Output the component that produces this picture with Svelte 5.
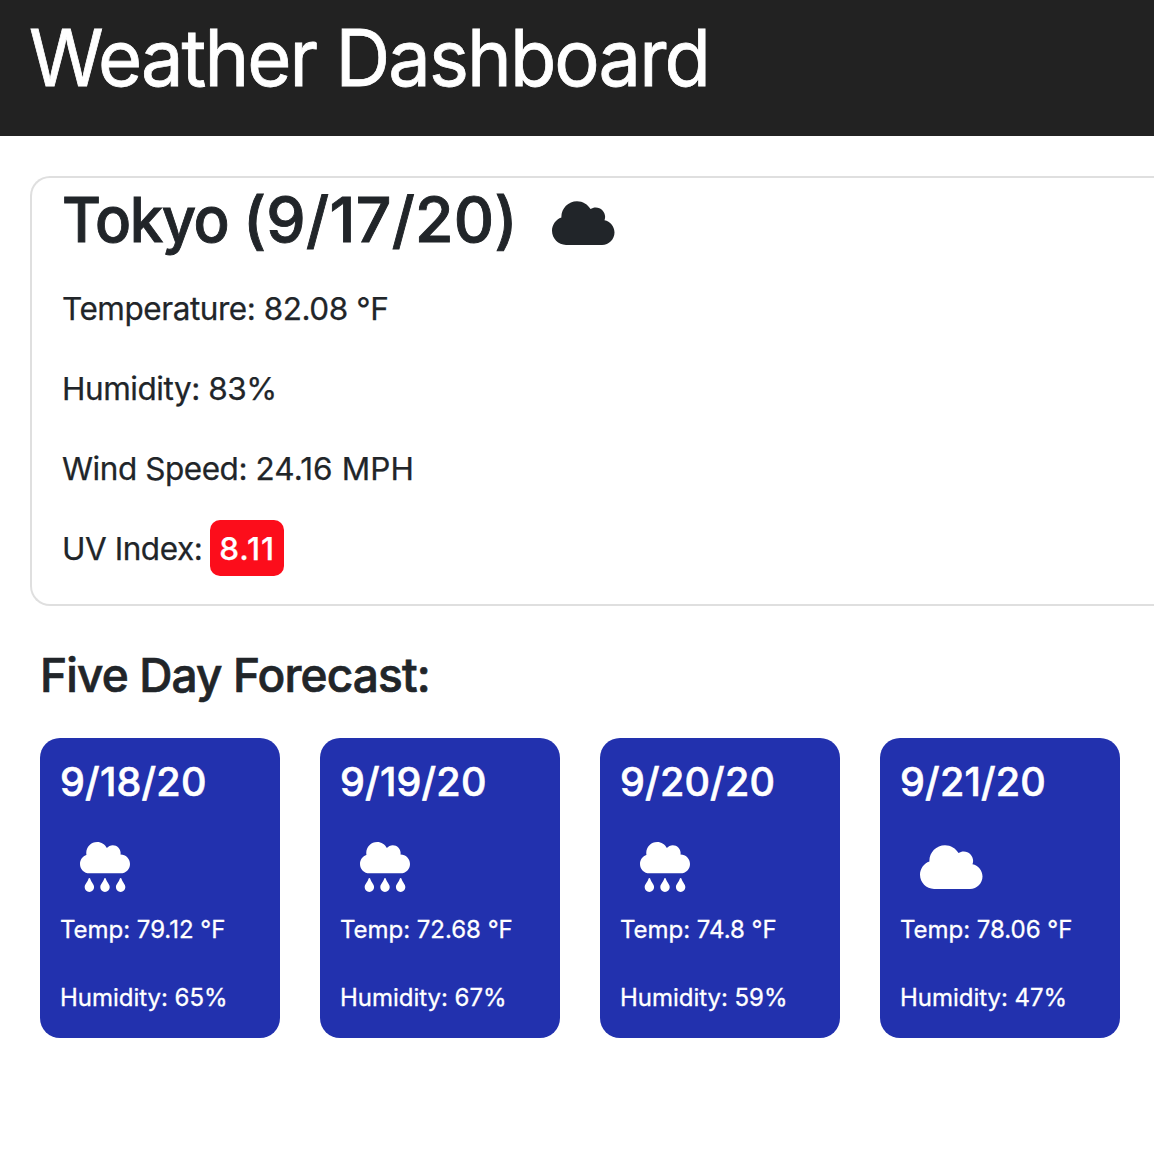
<script>
  const forecast = [
    { date: '9/18/20', icon: 'rain', temp: '79.12', humidity: 65 },
    { date: '9/19/20', icon: 'rain', temp: '72.68', humidity: 67 },
    { date: '9/20/20', icon: 'rain', temp: '74.8', humidity: 59 },
    { date: '9/21/20', icon: 'cloud', temp: '78.06', humidity: 47 }
  ];
</script>

{#snippet cloud()}
  <svg class="cloud" viewBox="0 0 640 512" aria-hidden="true">
    <path d="M537.6 226.6c4.1-10.7 6.4-22.4 6.4-34.6 0-53-43-96-96-96-19.7 0-38.1 6-53.3 16.2C367 64.2 315.3 32 256 32c-88.4 0-160 71.6-160 160 0 2.7.1 5.4.2 8.1C40.2 219.8 0 273.2 0 336c0 79.5 64.5 144 144 144h368c70.7 0 128-57.3 128-128 0-61.9-44-113.6-102.4-125.4z" />
  </svg>
{/snippet}

{#snippet rain()}
  <svg class="rain" viewBox="0 0 512 512" aria-hidden="true">
    <path d="M416 128c-.6 0-1.1.2-1.6.2 1.1-5.2 1.6-10.6 1.6-16.2 0-44.2-35.8-80-80-80-24.6 0-46.3 11.3-61 28.8C256.4 24.8 219.3 0 176 0 114.1 0 64 50.1 64 112c0 7.3.8 14.3 2.1 21.2C27.8 145.8 0 181.5 0 224c0 53 43 96 96 96h320c53 0 96-43 96-96s-43-96-96-96zM88 374.2c-12.8 44.4-40 56.4-40 87.7 0 27.7 21.5 50.1 48 50.1s48-22.4 48-50.1c0-31.4-27.2-43.1-40-87.7-2.2-8.1-13.5-8.5-16 0zm160 0c-12.8 44.4-40 56.4-40 87.7 0 27.7 21.5 50.1 48 50.1s48-22.4 48-50.1c0-31.4-27.2-43.1-40-87.7-2.2-8.1-13.5-8.5-16 0zm160 0c-12.8 44.4-40 56.4-40 87.7 0 27.7 21.5 50.1 48 50.1s48-22.4 48-50.1c0-31.4-27.2-43.1-40-87.7-2.2-8.1-13.5-8.5-16 0z" />
  </svg>
{/snippet}

<div class="page">
  <header><h1>Weather Dashboard</h1></header>
  <main>
    <section class="current">
      <h2><span class="city">Tokyo</span> <span class="today">(9/17/20)</span>{@render cloud()}</h2>
      <p class="temperature">Temperature: 82.08 °F</p>
      <p class="humidity">Humidity: 83%</p>
      <p class="wind">Wind Speed: <span>24.16 MPH</span></p>
      <p class="uv"><span>UV Index:</span><span class="badge">8.11</span></p>
    </section>
    <h3>Five Day Forecast:</h3>
    <div class="days">
      {#each forecast as day}
        <article>
          <h4>{day.date}</h4>
          <div class="icon">
            {#if day.icon === 'rain'}{@render rain()}{:else}{@render cloud()}{/if}
          </div>
          <p>Temp: {day.temp} °F</p>
          <p>Humidity: {day.humidity}%</p>
        </article>
      {/each}
    </div>
  </main>
</div>

<style>
  :global(body) {
    margin: 0;
    background: #fff;
  }
  .page {
    height: 1154px;
    overflow: hidden;
    font-family: Inter, 'Liberation Sans', sans-serif;
    color: #212529;
    box-sizing: border-box;
  }
  h1, h2, h3, h4, p {
    margin: 0;
    white-space: nowrap;
  }
  header {
    box-sizing: border-box;
    height: 136px;
    padding: 10px 29px 0;
    background: #222;
    color: #fff;
  }
  h1 {
    font-size: 78px;
    line-height: 96px;
    font-weight: 400;
    letter-spacing: -2px;
    -webkit-text-stroke: 0.8px currentColor;
    transform: scaleX(0.972);
    transform-origin: left;
  }
  main {
    padding: 40px 0 0 30px;
  }
  .current {
    box-sizing: border-box;
    height: 430px;
    padding: 3px 30px 0;
    border: 2px solid #dfdfdf;
    border-right: 0;
    border-radius: 20px 0 0 20px;
  }
  h2 {
    display: flex;
    align-items: center;
    height: 77px;
    margin-bottom: 27px;
    font-size: 62.5px;
    line-height: 77px;
    font-weight: 500;
    -webkit-text-stroke: 0.9px currentColor;
  }
  .city {
    width: 181px;
    letter-spacing: -1.5px;
    transform: scaleX(0.957);
    transform-origin: left;
  }
  .today {
    width: 309px;
    letter-spacing: 0.3px;
  }
  svg {
    display: block;
    fill: currentColor;
    flex: none;
  }
  .cloud {
    width: 62.5px;
    height: 50px;
  }
  h2 .cloud {
    margin-top: 7px;
  }
  .rain {
    width: 50px;
    height: 50px;
  }
  .current p {
    height: 48px;
    margin-bottom: 32px;
    font-size: 31.5px;
    line-height: 48px;
    letter-spacing: -0.45px;
    -webkit-text-stroke: 0.25px currentColor;
  }
  .current .wind span {
    letter-spacing: 0.1px;
  }
  .current .uv {
    display: flex;
    align-items: center;
    gap: 8px;
    margin-bottom: 0;
  }
  .badge {
    box-sizing: border-box;
    width: 74px;
    height: 56px;
    margin-top: -2px;
    padding-left: 9px;
    border-radius: 10px;
    background: #fc0d1b;
    color: #fff;
    line-height: 58px;
    font-weight: 500;
    letter-spacing: 0.9px;
  }
  h3 {
    margin: 40px 0 0 10px;
    font-size: 47px;
    line-height: 58px;
    font-weight: 500;
    letter-spacing: -0.9px;
    -webkit-text-stroke: 0.7px currentColor;
    transform: scaleX(0.979);
    transform-origin: left;
  }
  .days {
    display: flex;
    gap: 40px;
    margin: 34px 0 0 10px;
  }
  article {
    box-sizing: border-box;
    flex: none;
    width: 240px;
    height: 300px;
    padding: 20px;
    border-radius: 20px;
    background: #2231ae;
    color: #fff;
  }
  h4 {
    font-size: 39.5px;
    line-height: 48px;
    font-weight: 500;
    letter-spacing: 0.2px;
    -webkit-text-stroke: 0.6px currentColor;
  }
  .icon {
    height: 50px;
    margin: 36px 0 20px 20px;
  }
  article p {
    margin-bottom: 32px;
    font-size: 24px;
    line-height: 36px;
    letter-spacing: -0.03px;
    -webkit-text-stroke: 0.3px currentColor;
  }
</style>
